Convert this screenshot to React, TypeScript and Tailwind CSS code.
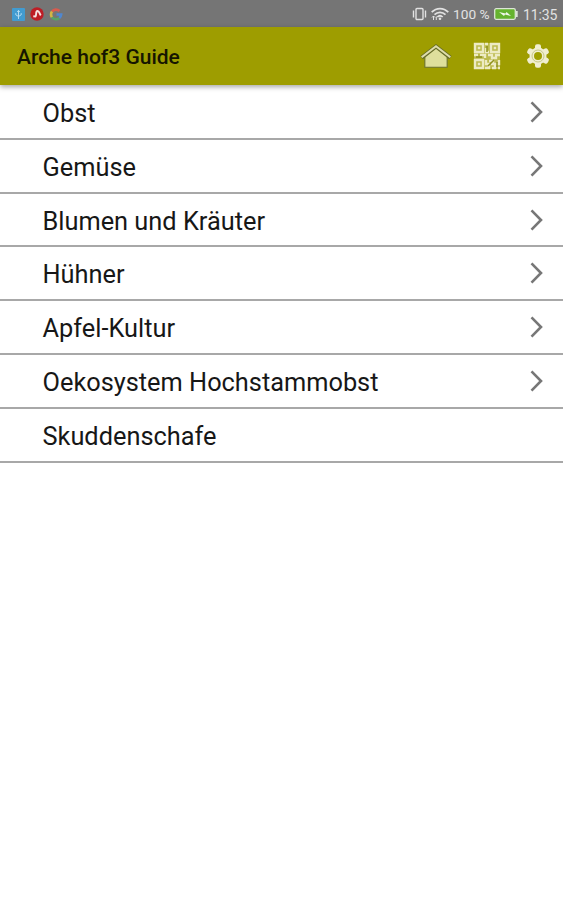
const items = [
  { label: "Obst", more: true },
  { label: "Gemüse", more: true },
  { label: "Blumen und Kräuter", more: true },
  { label: "Hühner", more: true },
  { label: "Apfel-Kultur", more: true },
  { label: "Oekosystem Hochstammobst", more: true },
  { label: "Skuddenschafe", more: false },
];

function StatusBar() {
  return (
    <div className="flex h-[27px] items-center bg-[#757575] pt-px pr-[6px] pl-3 text-[#e2e2e2]">
      <svg className="h-[13px] w-[13px]" viewBox="0 0 13 13">
        <rect width="13" height="13" rx="1" fill="#429bd0" />
        <path d="M6.5 11V2.5M5.3 4l1.2-1.6L7.7 4M3.8 5.2v1.6l2.7 1.7 2.7-1.7V5.2" fill="none" stroke="#b4dcf2" strokeWidth="1" />
      </svg>
      <svg className="ml-[5px] h-[14px] w-[14px]" viewBox="0 0 14 14">
        <circle cx="7" cy="7" r="6.7" fill="#bd1d25" />
        <path d="M3.3 9.2l2.2.3C6.8 7.5 5.3 4.3 7.5 4c2-.1 1.8 2.500 3.300 4.300" fill="none" stroke="#f5e2e2" strokeWidth="1.9" />
      </svg>
      <svg className="ml-[5px] h-[13px] w-[14px]" viewBox="0 0 14 13" fill="none" strokeWidth="2.6">
        <path d="M3 3.6A5 5 0 0 1 10.5 3" stroke="#d85b4e" />
        <path d="M3 3.6A5 5 0 0 0 3 9.3" stroke="#d3b544" />
        <path d="M3 9.3A5 5 0 0 0 10.3 10" stroke="#57a366" />
        <path d="M7.5 6.5h4.7A5 5 0 0 1 10.3 10" stroke="#5087cf" />
      </svg>
      <svg className="ml-auto h-[14px] w-[15px]" viewBox="0 0 15 14" fill="none" stroke="currentColor" strokeWidth="1.4">
        <rect x="4" y="1.5" width="7" height="11" rx="1" />
        <path d="M1.5 3.5v7M13.5 3.5v7" strokeWidth="1.4" />
      </svg>
      <svg className="ml-1 h-[14px] w-[18px]" viewBox="0 0 18 14" fill="none" stroke="currentColor" strokeWidth="1.7">
        <path d="M.7 5.2C5.5.4 12.5.4 17.3 5.2M3.5 7.6c3.2-3.1 7.8-3.1 11 0M6.3 10c1.6-1.5 3.8-1.5 5.4 0" />
        <circle cx="9" cy="11.7" r="1.3" fill="currentColor" stroke="none" />
        <path d="M2.5 9v4M1 10.500l1.500-1.500L4 10.500M5.300 9.500v3.500" strokeWidth="1" />
      </svg>
      <span className="ml-[4px] w-[37px] pt-px text-[13.7px] leading-none whitespace-nowrap">100 %</span>
      <svg className="ml-[4px] h-[12px] w-[24px]" viewBox="0 0 24 12">
        <rect x=".7" y=".7" width="20.6" height="10.6" rx="1.5" fill="#65b32e" stroke="#dce5d6" strokeWidth="1.3" />
        <rect x="22" y="3" width="1.7" height="6" fill="#dce5d6" />
        <path d="M5 4l6.5 1.500 1-1.500 4.500 4-6-1.400-1 1.400z" fill="#eff7e9" />
      </svg>
      <span className="ml-[5px] w-[34px] pt-px text-[14px] leading-none tracking-[-0.1px] whitespace-nowrap">11:35</span>
    </div>
  );
}

function HomeIcon() {
  return (
    <svg className="h-[26px] w-[34px]" viewBox="0 0 32 24">
      <path d="M5.5 12v10.5h21V12L16 4z" fill="#dedf9c" stroke="#69702e" strokeWidth="1" />
      <path d="M2.5 13.5L16 3l13.5 10.5" fill="none" stroke="#666c29" strokeWidth="3.8" />
      <path d="M2.5 13.2L16 2.8 29.5 13.2" fill="none" stroke="#deddab" strokeWidth="2" />
    </svg>
  );
}

function QrIcon() {
  return (
    <svg className="h-[28px] w-[28px]" viewBox="0 0 28 28" fill="none" stroke="#edebc3" strokeWidth="2.4">
      <rect x="1" y="1" width="26" height="26" fill="#d8d899" fillOpacity=".5" stroke="none" />
      <path d="M2 2h8v8H2zM18 2h8v8h-8zM2 18h8v8H2z" />
      <path d="M4.8 4.8h2.5v2.5H4.8zM20.7 4.8h2.5v2.5h-2.5zM4.8 20.7h2.5v2.5H4.8z" fill="#edebc3" stroke="none" />
      <path d="M12 2h3M13 6v4h3M1 13h4M7 13h5v3M15 13h4v3h4v-3h4M13 18v4h3v4h-4M16 19h4M20 18v4h-2M19 26h3v-4h4v-4M25 26h2" />
      <path d="M14 4v6M3 15h6M21 18l-6 6M24 20v5" stroke="#8f911d" strokeWidth="1.5" />
    </svg>
  );
}

function GearIcon() {
  return (
    <svg className="h-[26px] w-[26px]" viewBox="0 0 26 26">
      <g fill="#f0eed0">
        <rect x="10" y="1.3" width="6" height="23.4" rx="2" />
        <rect x="10" y="1.3" width="6" height="23.4" rx="2" transform="rotate(60 13 13)" />
        <rect x="10" y="1.3" width="6" height="23.4" rx="2" transform="rotate(120 13 13)" />
        <circle cx="13" cy="13" r="8.5" />
      </g>
      <circle cx="13" cy="13" r="6" fill="none" stroke="#c7c886" strokeWidth="1" />
      <circle cx="13" cy="13" r="4" fill="#a0a000" />
    </svg>
  );
}

export default function App() {
  return (
    <div className="flex h-[900px] w-full flex-col overflow-hidden bg-white font-['Roboto',sans-serif]">
      <StatusBar />
      <header className="relative flex h-[58px] shrink-0 items-center bg-[#9e9d00] pr-3 pl-[17px] shadow-[0_2px_5px_rgba(0,0,0,0.35)]">
        <h1 className="pt-[3px] text-[21px] font-medium text-[#151500]">Arche hof3 Guide</h1>
        <div className="ml-auto flex items-center">
          <HomeIcon />
          <div className="ml-[20px]"><QrIcon /></div>
          <div className="ml-[24px]"><GearIcon /></div>
        </div>
      </header>
      <ul className="pt-[1.1px]">
        {items.map((item) => (
          <li key={item.label} className="flex h-[53.8px] items-center border-b-2 border-[#a8a8a8] pr-[19px] pl-[42.5px]">
            <span className="pt-[2px] text-[25.35px] leading-8 whitespace-nowrap text-[#171717]">{item.label}</span>
            {item.more && (
              <svg className="ml-auto h-[24px] w-[15px]" viewBox="0 0 15 24">
                <path d="M2.5 2.3L12 12 2.5 21.7" fill="none" stroke="#777" strokeWidth="2.6" />
              </svg>
            )}
          </li>
        ))}
      </ul>
    </div>
  );
}
